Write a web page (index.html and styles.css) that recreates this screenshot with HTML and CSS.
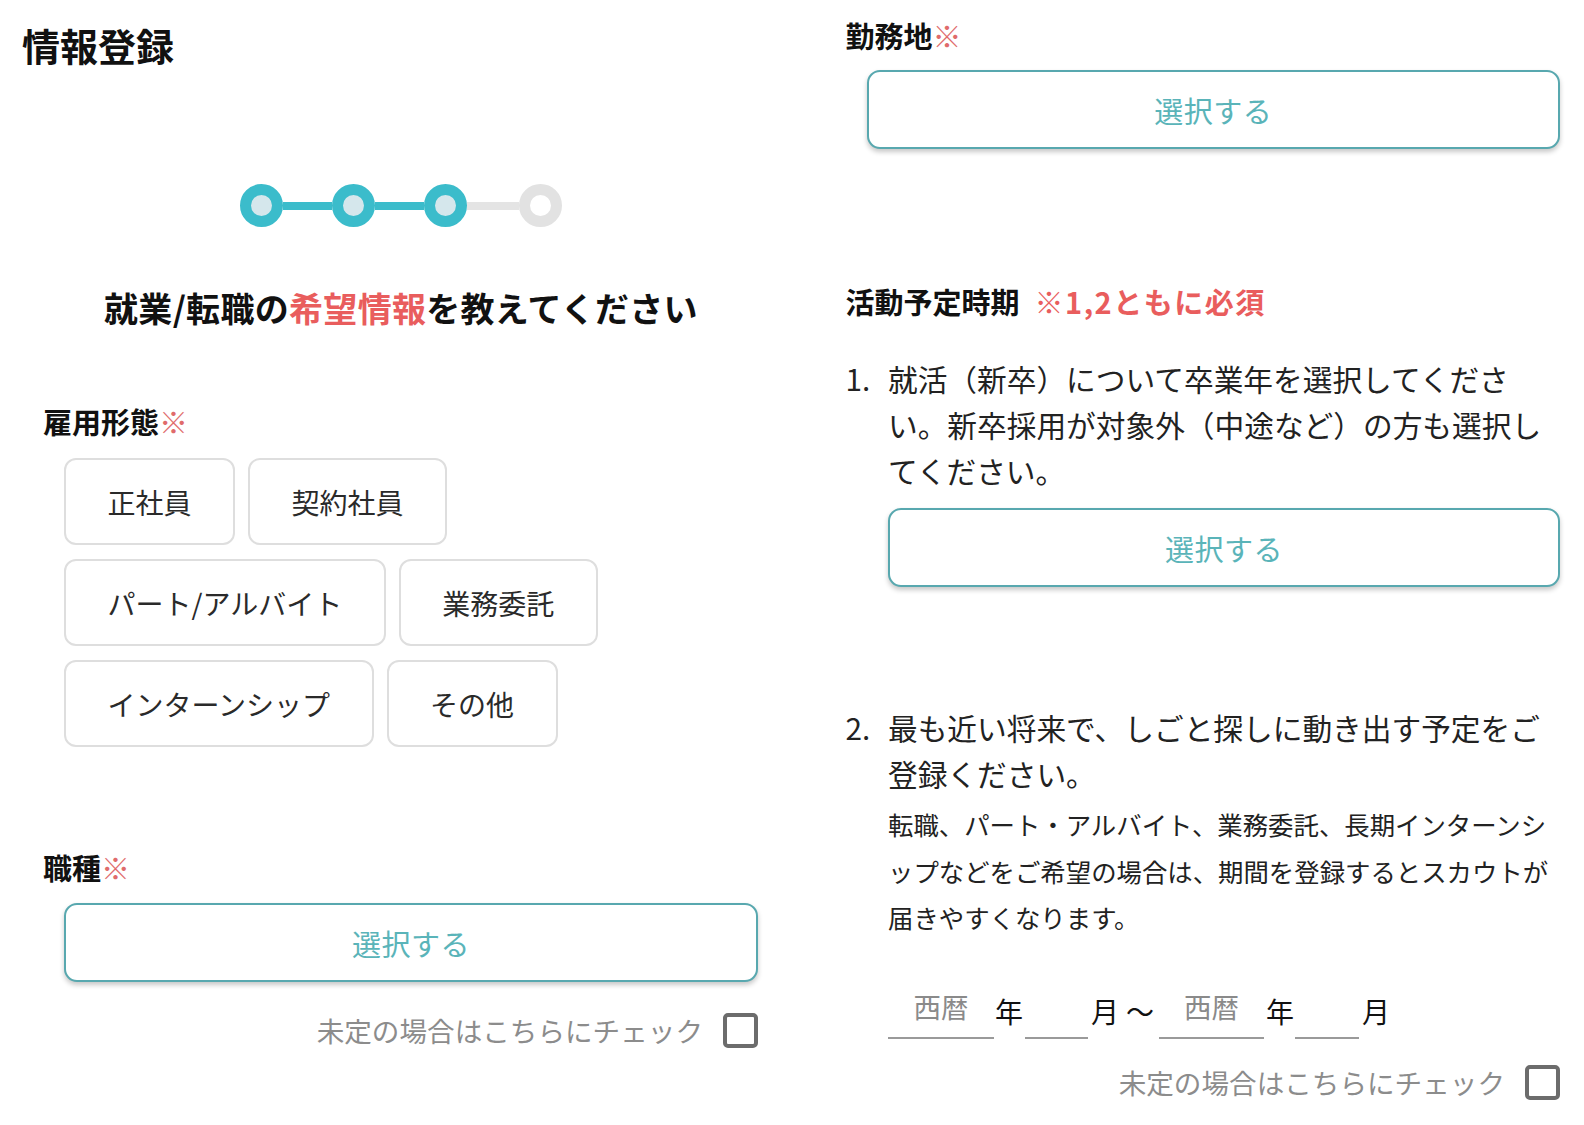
FILE: index.html
```html
<!DOCTYPE html>
<html lang="ja">
<head>
<meta charset="utf-8">
<title>情報登録</title>
<link rel="stylesheet" href="styles.css">
</head>
<body>
<div class="page">
  <section class="panel panel-left">
    <h1 class="title">情報登録</h1>
    <div class="stepper">
      <span class="dot done"></span><span class="bar done"></span>
      <span class="dot done"></span><span class="bar done"></span>
      <span class="dot done"></span><span class="bar last"></span>
      <span class="dot"></span>
    </div>
    <h2 class="lead">就業/転職の<em>希望情報</em>を教えてください</h2>

    <div class="field field-type">
      <div class="label">雇用形態<span class="req">※</span></div>
      <div class="chips">
        <div class="chip-row">
          <div class="chip">正社員</div>
          <div class="chip">契約社員</div>
        </div>
        <div class="chip-row">
          <div class="chip">パート/アルバイト</div>
          <div class="chip">業務委託</div>
        </div>
        <div class="chip-row">
          <div class="chip">インターンシップ</div>
          <div class="chip">その他</div>
        </div>
      </div>
    </div>

    <div class="field field-job">
      <div class="label">職種<span class="req">※</span></div>
      <div class="select select-indent">選択する</div>
      <div class="undecided"><span class="undecided-text">未定の場合はこちらにチェック</span><span class="box"></span></div>
    </div>
  </section>

  <section class="panel panel-right">
    <div class="field-loc">
      <div class="label">勤務地<span class="req">※</span></div>
      <div class="select select-indent">選択する</div>
    </div>

    <div class="field-period">
      <div class="label">活動予定時期<span class="req-strong">※1,2ともに必須</span></div>
      <ol class="steps">
        <li class="step">
          <span class="num">1.</span>
          <div class="step-body">
            <p class="step-text">就活（新卒）について卒業年を選択してくださ<br>い。新卒採用が対象外（中途など）の方も選択し<br>てください。</p>
            <div class="select select-step">選択する</div>
          </div>
        </li>
        <li class="step step-2">
          <span class="num">2.</span>
          <div class="step-body">
            <p class="step-text">最も近い将来で、しごと探しに動き出す予定をご<br>登録ください。</p>
            <p class="step-note">転職、パート・アルバイト、業務委託、長期インターンシ<br>ップなどをご希望の場合は、期間を登録するとスカウトが<br>届きやすくなります。</p>
            <div class="date-row">
              <span class="inp inp-y">西暦</span>
              <span class="unit u-y1">年</span>
              <span class="inp inp-m m1"></span>
              <span class="unit u-m1">月</span>
              <span class="unit tilde">〜</span>
              <span class="inp inp-y y2">西暦</span>
              <span class="unit u-y2">年</span>
              <span class="inp inp-m m2"></span>
              <span class="unit u-m2">月</span>
            </div>
          </div>
        </li>
      </ol>
      <div class="undecided undecided-right"><span class="undecided-text">未定の場合はこちらにチェック</span><span class="box"></span></div>
    </div>
  </section>
</div>
</body>
</html>
```
FILE: styles.css
```css
* { box-sizing: border-box; }
html, body { margin: 0; padding: 0; background: #fff; }
body {
  font-family: "Noto Sans CJK JP", "Noto Sans", sans-serif;
  color: #222;
}
.page {
  display: grid;
  grid-template-columns: 802px 782px;
  width: 1584px;
  height: 1125px;
  overflow: hidden;
}

/* ---------- left ---------- */
.title {
  margin: 22px 0 0;
  padding-left: 22px;
  font-size: 38px;
  line-height: 46px;
  font-weight: 700;
  color: #111;
}
.stepper {
  display: flex;
  align-items: center;
  justify-content: center;
  height: 43px;
  margin-top: 116px;
}
.dot {
  flex: none;
  width: 43px;
  height: 43px;
  border-radius: 50%;
  border: 11px solid #e2e2e2;
  background: #fff;
}
.dot.done { border-color: #3bbccb; background: #d5e7ec; }
.bar { flex: none; width: 49px; height: 8px; background: #e4e4e4; }
.bar.done { background: #3bbccb; }
.bar.last { width: 52px; }

.lead {
  margin: 57px 0 0;
  text-align: center;
  font-size: 34px;
  line-height: 48px;
  font-weight: 700;
  letter-spacing: 0.3px;
  color: #111;
}
.lead em { font-style: normal; color: #e95d5d; }

.field { padding: 0 44px 0 43px; }
.label {
  font-size: 29px;
  line-height: 40px;
  font-weight: 700;
  color: #111;
}
.req { font-weight: 400; color: #e06b6b; }
.req-strong {
  margin-left: 15px;
  letter-spacing: 1.5px;
  color: #e95d5d;
  font-weight: 700;
}

.field-type { margin-top: 69px; }
.chips {
  display: flex;
  flex-direction: column;
  gap: 14px;
  margin: 17px 0 0 21px;
}
.chip-row { display: flex; gap: 13px; }
.chip {
  display: flex;
  align-items: center;
  height: 87px;
  padding: 0 41.5px;
  border: 2px solid #dedede;
  border-radius: 12px;
  font-size: 28px;
  color: #2a2a2a;
}

.field-job { margin-top: 100px; }
.select {
  display: flex;
  align-items: center;
  justify-content: center;
  height: 79px;
  border: 2.5px solid #58a8af;
  border-radius: 13px;
  box-shadow: 0 3px 5px rgba(0, 0, 0, 0.22);
  font-size: 29px;
  letter-spacing: 0.5px;
  color: #5ab4b9;
  background: #fff;
}
.select-indent { margin: 16px 0 0 21px; }

.undecided {
  display: flex;
  justify-content: flex-end;
  align-items: center;
  gap: 20px;
  margin-top: 28px;
  font-size: 27.6px;
  color: #8c8c8c;
}
.box {
  flex: none;
  width: 35px;
  height: 35px;
  border: 4px solid #6c6c6c;
  border-radius: 5px;
}

/* ---------- right ---------- */
.panel-right { padding: 0 24px 0 43.5px; }
.field-loc { padding-top: 15px; }
.field-loc .select-indent { margin-top: 15px; }
.field-period { margin-top: 132px; }

.steps { list-style: none; margin: 35px 0 0; padding: 0; }
.step {
  display: flex;
  font-size: 29.7px;
  line-height: 46px;
  color: #222;
}
.num { flex: none; width: 42.5px; }
.step-body { flex: 1; min-width: 0; }
.step-text { margin: 0; white-space: nowrap; }
.select-step { margin-top: 14px; }
.step-2 { margin-top: 118px; }
.step-note {
  margin: 4px 0 0;
  font-size: 25.4px;
  line-height: 46.5px;
  white-space: nowrap;
  color: #222;
}

.date-row {
  display: flex;
  align-items: flex-end;
  margin-top: 46px;
  font-size: 28px;
}
.inp {
  flex: none;
  display: flex;
  align-items: center;
  justify-content: center;
  height: 52px;
  padding-bottom: 12px;
  border-bottom: 2px solid #9a9a9a;
  font-size: 27.5px;
  color: #8a8a8a;
}
.inp-y { width: 106px; }
.inp-m { width: 63px; }
.unit {
  flex: none;
  line-height: 28px;
  margin-bottom: 14px;
  color: #111;
}
.u-y1 { margin-left: 1px; }
.m1 { margin-left: 2px; }
.u-m1 { margin-left: 3px; }
.tilde { margin-left: 7px; }
.y2 { margin-left: 5px; width: 105px; }
.u-y2 { margin-left: 2px; }
.m2 { margin-left: 1px; width: 64px; }
.u-m2 { margin-left: 3px; }

.undecided-right { margin-top: 23.5px; }
```
